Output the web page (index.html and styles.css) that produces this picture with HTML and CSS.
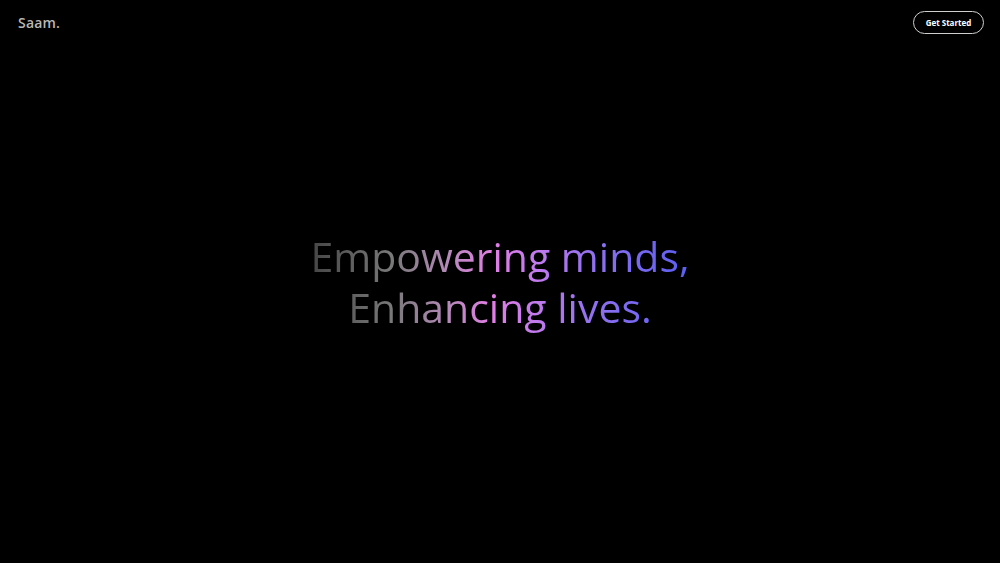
FILE: index.html
```html
<!DOCTYPE html>
<html lang="en">
<head>
<meta charset="utf-8">
<title>Saam.</title>
<link rel="stylesheet" href="styles.css">
</head>
<body>
<div class="page">
  <header class="nav">
    <div class="logo">Saam.</div>
    <a class="cta" href="#">Get Started</a>
  </header>
  <main class="hero">
    <h1 class="headline">Empowering minds,<br>Enhancing lives.</h1>
  </main>
</div>
</body>
</html>
```
FILE: styles.css
```css
html, body {
  margin: 0;
  padding: 0;
  background: #000;
  height: 100%;
}
.page {
  height: 563px;
  display: flex;
  flex-direction: column;
  font-family: "Open Sans", "Liberation Sans", sans-serif;
}
.nav {
  display: flex;
  justify-content: space-between;
  align-items: center;
  padding: 11px 16px 0 18px;
  height: 22px;
}
.logo {
  color: #b8b8b8;
  font-size: 14px;
  font-weight: 600;
  letter-spacing: 0.2px;
}
.cta {
  display: flex;
  align-items: center;
  justify-content: center;
  box-sizing: border-box;
  width: 71px;
  height: 23px;
  border: 1.5px solid #cfcfcf;
  border-radius: 12px;
  color: #fff;
  font-size: 8px;
  font-weight: 700;
  text-decoration: none;
}
.hero {
  flex: 1;
  display: flex;
  justify-content: center;
  align-items: flex-start;
  padding-top: 198px;
}
.headline {
  margin: 0;
  font-size: 41px;
  font-weight: 400;
  line-height: 51px;
  text-align: center;
  letter-spacing: 0;
  background: linear-gradient(90deg, #454545 0%, #7a7a7a 22%, #b48ab8 36%, #e27ee6 48%, #c07aee 60%, #9070f0 75%, #5a5ef2 100%);
  -webkit-background-clip: text;
  background-clip: text;
  color: transparent;
}
```
